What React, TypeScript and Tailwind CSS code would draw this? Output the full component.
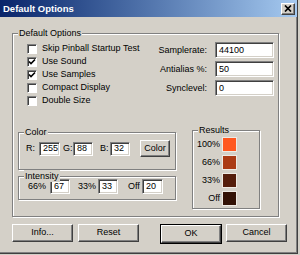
import React from "react";

const FIELD =
  "bg-white border border-t-[#808080] border-l-[#808080] border-b-white border-r-white shadow-[inset_1px_1px_0_#404040,inset_-1px_-1px_0_#D4D0C8] flex items-center pl-[3px] text-[9px] leading-none text-black";

const BTN =
  "flex items-center justify-center bg-[#D4D0C8] border border-t-white border-l-white border-b-[#404040] border-r-[#404040] shadow-[inset_-1px_-1px_0_#808080] text-[9px] text-black";

function Group({
  label,
  className,
  children,
}: {
  label: string;
  className: string;
  children?: React.ReactNode;
}) {
  return (
    <div
      className={`relative border border-[#808080] shadow-[1px_1px_0_#fff,inset_1px_1px_0_#fff] ${className}`}
    >
      <span className="absolute top-[-7px] left-[5px] bg-[#D4D0C8] px-[1px] text-[9px] leading-[12px] text-black">
        {label}
      </span>
      {children}
    </div>
  );
}

function Check({ checked, label }: { checked?: boolean; label: string }) {
  return (
    <div className="flex h-[13px] items-center">
      <div className="flex h-[10px] w-[10px] items-center justify-center bg-white border border-t-[#808080] border-l-[#808080] border-b-white border-r-white shadow-[inset_1px_1px_0_#404040]">
        {checked && (
          <svg width="8" height="8" viewBox="0 0 8 8">
            <polyline
              points="1,3.5 3,5.5 7,1.5"
              fill="none"
              stroke="#000"
              strokeWidth="1.6"
            />
          </svg>
        )}
      </div>
      <span className="ml-[5px] text-[9px] leading-none text-black">{label}</span>
    </div>
  );
}

function FieldRow({ label, value }: { label: string; value: string }) {
  return (
    <div className="flex h-[16px] items-center">
      <span className="w-[50px] text-right text-[9px] leading-none text-black">{label}</span>
      <div className={`${FIELD} ml-[8px] h-[16px] w-[59px]`}>{value}</div>
    </div>
  );
}

function Swatch({ label, color }: { label: string; color: string }) {
  return (
    <div className="flex h-[15px] items-center">
      <span className="w-[29px] pr-[2px] text-right text-[9px] leading-none text-black">{label}</span>
      <div
        className="h-[15px] w-[15px] border border-[#eeeae4]"
        style={{ backgroundColor: color }}
      />
    </div>
  );
}

export default function App() {
  return (
    <div className="h-[255px] w-[300px] overflow-hidden bg-[#D4D0C8] font-['Liberation_Sans',Arial,sans-serif]">
      <div className="flex h-[254px] w-[298px] flex-col border-b border-r border-b-[#404040] border-r-[#404040] shadow-[inset_-1px_-1px_0_#808080]">
        {/* title bar */}
        <div className="flex h-[17px] items-center bg-gradient-to-r from-[#0A246A] to-[#A6CAF0] pl-[3px] pr-[2px]">
          <span className="text-[9.5px] font-bold leading-none text-white">Default Options</span>
          <div className={`${BTN} ml-auto h-[12px] w-[14px]`}>
            <svg width="8" height="7" viewBox="0 0 8 7">
              <path d="M1 0.5 L7 6.5 M7 0.5 L1 6.5" stroke="#000" strokeWidth="1.7" />
            </svg>
          </div>
        </div>

        {/* body */}
        <div className="pl-[12px] pt-[16px]">
          <Group label="Default Options" className="h-[184px] w-[267px]">
            <div className="flex h-[96px]">
              <div className="flex flex-col pl-[14px] pt-[8px]">
                <Check label="Skip Pinball Startup Test" />
                <Check checked label="Use Sound" />
                <Check checked label="Use Samples" />
                <Check label="Compact Display" />
                <Check label="Double Size" />
              </div>
              <div className="ml-auto flex flex-col gap-[3px] pr-[4px] pt-[8px]">
                <FieldRow label="Samplerate:" value="44100" />
                <FieldRow label="Antialias %:" value="50" />
                <FieldRow label="Synclevel:" value="0" />
              </div>
            </div>

            <div className="flex items-start">
              <div className="ml-[5px] flex w-[158px] flex-col">
                <Group label="Color" className="mt-[2px] h-[38px] w-[158px]">
                  <div className="mt-[7px] flex h-[17px] items-center pl-[7px] text-[9px] leading-none text-black">
                    <span className="w-[13px]">R:</span>
                    <div className={`${FIELD} h-[14px] w-[21px]`}>255</div>
                    <span className="ml-[3px] w-[10px]">G:</span>
                    <div className={`${FIELD} h-[14px] w-[20px]`}>88</div>
                    <span className="ml-[7px] w-[10px]">B:</span>
                    <div className={`${FIELD} h-[14px] w-[20px]`}>32</div>
                    <div className={`${BTN} ml-[10px] h-[17px] w-[30px]`}>Color</div>
                  </div>
                </Group>
                <Group label="Intensity" className="mt-[6px] h-[24px] w-[158px]">
                  <div className="mt-[2px] flex h-[15px] items-center pl-[9px] text-[9px] leading-none text-black">
                    <span className="w-[22px]">66%</span>
                    <div className={`${FIELD} h-[15px] w-[20px]`}>67</div>
                    <span className="ml-[8px] w-[20px]">33%</span>
                    <div className={`${FIELD} h-[15px] w-[20px]`}>33</div>
                    <span className="ml-[10px] w-[14px]">Off</span>
                    <div className={`${FIELD} h-[15px] w-[21px]`}>20</div>
                  </div>
                </Group>
              </div>
              <Group label="Results" className="ml-[16px] h-[79px] w-[68px]">
                <div className="flex flex-col gap-[3px] pt-[6px]">
                  <Swatch label="100%" color="#FF5820" />
                  <Swatch label="66%" color="#AB3B15" />
                  <Swatch label="33%" color="#541D0B" />
                  <Swatch label="Off" color="#331206" />
                </div>
              </Group>
            </div>
          </Group>

          <div className="mt-[7px] flex">
            <div className={`${BTN} h-[18px] w-[61px]`}>Info...</div>
            <div className={`${BTN} ml-[5px] h-[18px] w-[61px]`}>Reset</div>
            <div className="ml-[21px] border border-black">
              <div className={`${BTN} h-[18px] w-[60px]`}>OK</div>
            </div>
            <div className={`${BTN} ml-[4px] h-[18px] w-[61px]`}>Cancel</div>
          </div>
        </div>
      </div>
    </div>
  );
}
